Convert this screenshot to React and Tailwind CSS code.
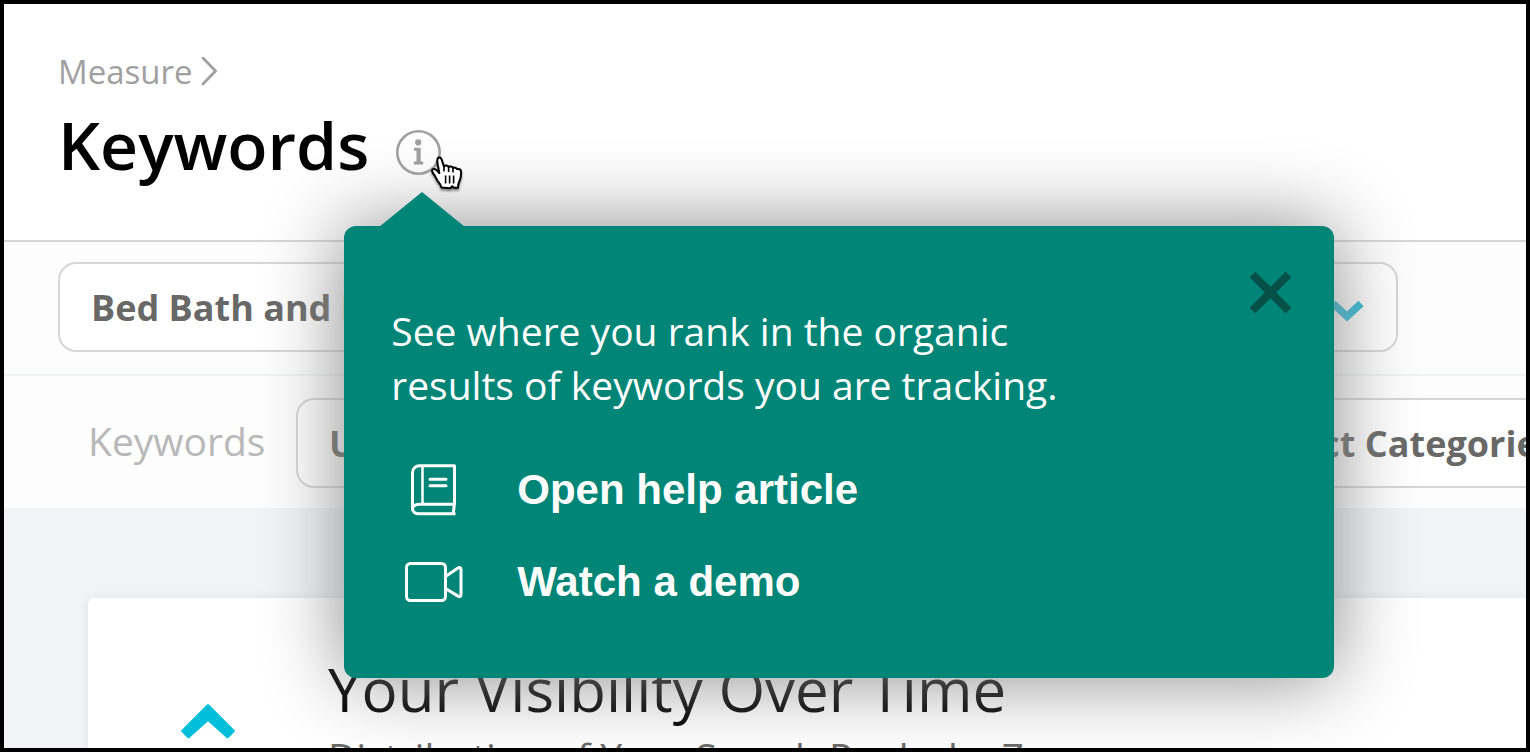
import { useState } from "react";

// shared look of the rounded filter drop-downs
const selectClass =
  "h-[90px] w-full appearance-none rounded-[18px] border-2 border-[#d6d6d6] bg-white pl-[31px] pt-[2px] text-[36px] font-bold text-[#686866]";

function FilterSelect({ label, value, className }) {
  return (
    <div className={`relative shrink-0 ${className}`}>
      <select aria-label={label} className={selectClass}>
        <option>{value}</option>
      </select>
      <svg
        viewBox="0 0 34 22"
        className="pointer-events-none absolute right-[34px] top-[38px] h-[22px] w-[34px]"
        fill="none"
        stroke="#2cbcd8"
        strokeWidth="7.5"
        strokeLinejoin="miter"
      >
        <path d="M3 3.5 17 16.500 31 3.5" />
      </svg>
    </div>
  );
}

function InfoIcon() {
  return (
    <svg viewBox="0 0 45 45" className="h-[45px] w-[45px]">
      <circle cx="22.5" cy="22.5" r="21.2" fill="none" stroke="#a0a0a0" strokeWidth="2.6" />
      <circle cx="22.2" cy="12.4" r="3.1" fill="#a0a0a0" />
      <path d="M18 17.8h6.700v13.800h2.500v2.900h-9.400v-2.900h2.700v-10.900h-2.500z" fill="#a0a0a0" />
    </svg>
  );
}

function HandCursor() {
  return (
    <svg
      viewBox="0 0 32 36"
      className="pointer-events-none absolute left-[35px] top-[25px] z-20 h-9 w-8 drop-shadow-[0_2px_1px_rgba(0,0,0,0.45)]"
    >
      <path
        d="M10.500 32.500C10.200 30.500 8.700 28.500 7.200 26.700 5.500 24.500 4.800 22 3 19.500 1.900 18 .7 16.800 1.100 15.300c.5-1.700 2.600-1.600 4-.5 1.300 1 2.200 2.200 3.300 3.300L6.700 9.500C6.200 6.600 5.600 3.200 7.700 2.500c2-.5 3 1.600 3.500 3.700l1.700 5.300c.9-1.500 4.300-1.300 4.800.7 1-1.300 3.900-.9 4.400 1 1-1 3.300-.7 4 1 1.400-.8 3.900.1 4 2.500.1 3.300-.3 6.300-1.400 9-.8 1.900-1.900 3-1.600 7h-4.300l-1.500-1.500-2 2z"
        fill="#fff"
        stroke="#000"
        strokeWidth="2"
        strokeLinejoin="round"
      />
      <path
        d="M13 11.500v5M17.600 12.500v4.500M22 13.500v4M14.600 20.500v8M18.600 20.500v8M22.600 20.500v8"
        stroke="#000"
        strokeWidth="1.600"
      />
    </svg>
  );
}

function BookIcon() {
  return (
    <svg viewBox="0 0 46 52" className="h-[52px] w-[46px]" fill="none" stroke="#fff" strokeWidth="3">
      <path d="M8.500 1.700h35v38.500h-35c-4 0-7 1.700-7 5V8.700c0-4 3-7 7-7z" strokeLinejoin="round" />
      <path d="M1.500 44.500c0 3.500 2.800 5.300 6.500 5.300h36.500M43 40v4.500c-.8 2-.6 3.600 0 5.300" />
      <path d="M11.500 1.500v38.500" strokeWidth="2.500" />
      <path d="M19 15.200h16M19 21.700h16" strokeLinecap="round" />
    </svg>
  );
}

function VideoIcon() {
  return (
    <svg
      viewBox="0 0 58 41"
      className="h-[41px] w-[58px]"
      fill="none"
      stroke="#fff"
      strokeWidth="3"
      strokeLinejoin="round"
    >
      <rect x="1.500" y="2.500" width="39" height="37" rx="4" />
      <path d="M40.500 15.500 53 7c1.700-1 3-.5 3 1.500v25c0 2-1.300 2.700-3 1.600L40.500 27.500" />
    </svg>
  );
}

function HelpPopover({ onClose }) {
  return (
    <div
      role="dialog"
      aria-label="About Keywords"
      className="absolute -left-[52px] top-24 z-10 h-[452px] w-[990px] rounded-xl bg-[#008577] pl-[47px] pt-[78px] text-white shadow-[0_0_80px_#888]"
    >
      <svg viewBox="0 0 86 35" className="absolute -top-[34px] left-[35px] h-[35px] w-[86px]">
        <path d="M43 0 86 35H0z" fill="#008577" />
      </svg>

      <button aria-label="Close" onClick={onClose} className="absolute right-[42px] top-[45px]">
        <svg viewBox="0 0 43 43" className="h-[43px] w-[43px]" stroke="#065048" strokeWidth="8">
          <path d="M3.500 3.500 39.500 39.500M39.500 3.500 3.500 39.500" />
        </svg>
      </button>

      <p className="w-[720px] text-[39px] leading-[54px]">
        See where you rank in the organic results of keywords you are tracking.
      </p>

      <ul className="mt-8 font-['Liberation_Sans',Arial,sans-serif] text-[42px] font-bold">
        <li>
          <a href="#help" className="flex h-[92px] items-center">
            <span className="flex w-[86px] justify-center">
              <BookIcon />
            </span>
            <span className="ml-10">Open help article</span>
          </a>
        </li>
        <li>
          <a href="#demo" className="flex h-[92px] items-center">
            <span className="flex w-[86px] justify-center">
              <VideoIcon />
            </span>
            <span className="ml-10">Watch a demo</span>
          </a>
        </li>
      </ul>
    </div>
  );
}

export default function App() {
  const [helpOpen, setHelpOpen] = useState(true);

  return (
    <div className="h-screen overflow-hidden border-4 border-black bg-[#f0f4f5] font-['Open_Sans',sans-serif]">

      {/* ===== PAGE HEADER ===== */}
      <header className="border-b-2 border-[#d6d6d6] bg-white pb-[50px] pl-[54px] pt-11">
        <nav className="flex items-center gap-[7px] text-[33px] leading-[48px] text-[#a0a0a0]">
          <a href="#measure">Measure</a>
          <svg viewBox="0 0 18 30" className="h-[30px] w-[18px]" fill="none" stroke="#a0a0a0" strokeWidth="2.8" strokeLinecap="round">
            <path d="M3 1 15.500 14 3 27" />
          </svg>
        </nav>

        <div className="mt-[2px] flex items-center">
          <h1 className="text-[66px] font-semibold leading-[92px] text-black">Keywords</h1>
          <div className="relative ml-[27px] mt-4">
            <button aria-label="Info" className="block" onClick={() => setHelpOpen(!helpOpen)}>
              <InfoIcon />
            </button>
            <HandCursor />
            {helpOpen && <HelpPopover onClose={() => setHelpOpen(false)} />}
          </div>
        </div>
      </header>

      {/* ===== FILTERS ===== */}
      <section className="bg-[#fdfdfd]">
        <div className="border-b-2 border-[#f0f4f5] pb-[22px] pl-[54px] pt-5">
          <FilterSelect label="Site" value="Bed Bath and Beyond" className="w-[1340px]" />
        </div>
        <div className="flex items-center pb-5 pl-[84px] pt-[22px]">
          <span className="w-52 shrink-0 pb-[3px] text-[39px] text-[#b8b8b8]">Keywords</span>
          <FilterSelect label="Location" value="United States" className="w-[895px]" />
          <FilterSelect label="Categories" value="Select Categories" className="ml-6 w-[600px]" />
        </div>
      </section>

      {/* ===== VISIBILITY CARD ===== */}
      <main className="pl-[84px] pt-[90px]">
        <section className="flex rounded-l-md bg-white pb-12 pt-14 shadow-[0_0_10px_rgba(0,0,0,0.08)]">
          <button aria-label="Collapse" className="ml-[93px] mt-[50px] h-[35px] w-[54px] shrink-0">
            <svg viewBox="0 0 54 35" className="h-[35px] w-[54px]">
              <path
                d="M27 1.500 52.500 27 46.500 33 27 15.500 7.500 33 1.500 27z"
                fill="#00bfdb"
                stroke="#00bfdb"
                strokeWidth="2.5"
                strokeLinejoin="round"
              />
            </svg>
          </button>
          <div className="ml-[93px] whitespace-nowrap">
            <h2 className="text-[60px] leading-[70px] text-black">Your Visibility Over Time</h2>
            <p className="mt-[6px] text-[39px] leading-[54px] text-[#686866]">
              Distribution of Your Search Ranks by Zone
            </p>
          </div>
        </section>
      </main>

    </div>
  );
}
